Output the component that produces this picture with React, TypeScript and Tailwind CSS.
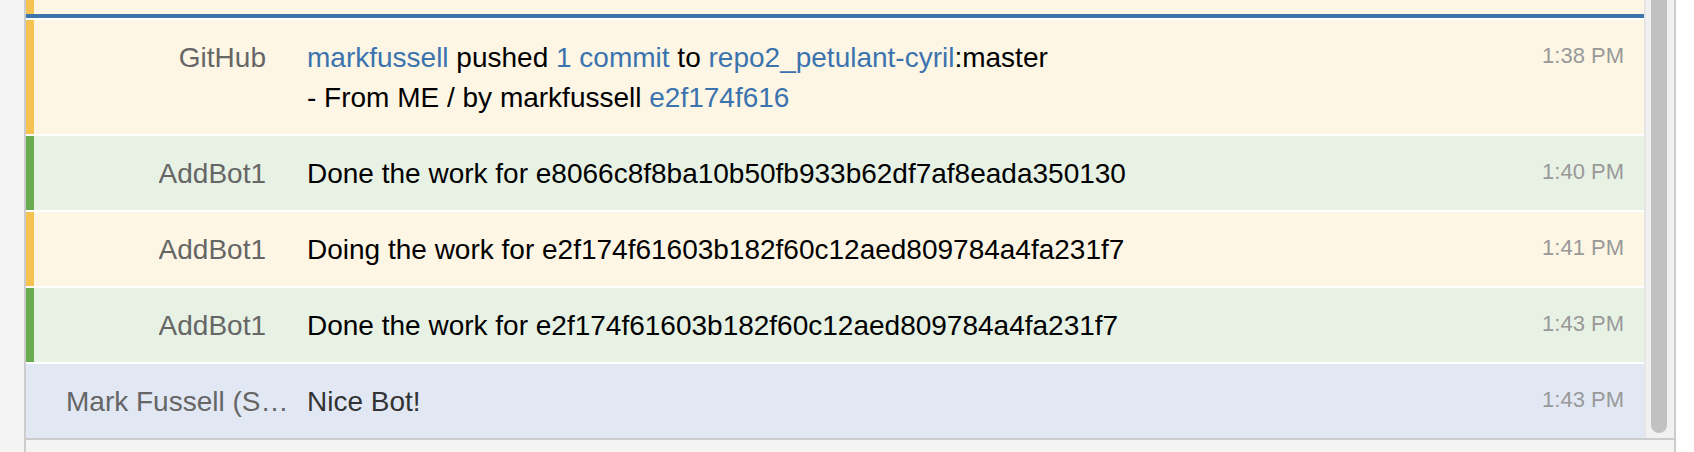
import type { ReactNode } from 'react';

type Kind = 'yellow' | 'green' | 'blue';

const rowBg: Record<Kind, string> = {
  yellow: 'bg-[#fdf6e4]',
  green: 'bg-[#e7f1e4]',
  blue: 'bg-[#e1e8f3]',
};

const stripeBg: Record<Kind, string> = {
  yellow: 'bg-[#f6c350]',
  green: 'bg-[#69ab4f]',
  blue: 'bg-[#e1e8f3]',
};

const Link = ({ children }: { children: ReactNode }) => (
  <span className="text-[#3b73af]">{children}</span>
);

function Message({
  kind,
  name,
  time,
  children,
  muted,
}: {
  kind: Kind;
  name: string;
  time: string;
  children: ReactNode;
  muted?: boolean;
}) {
  return (
    <div className={`flex ${rowBg[kind]}`}>
      <div className={`w-[8px] shrink-0 ${stripeBg[kind]}`} />
      {/* sender column */}
      <div className="w-[232px] shrink-0 pl-[32px] pt-[18px] pb-[16px] text-right text-[#666666] leading-[40px] whitespace-nowrap">
        <span className="inline-block max-w-[228px] truncate align-top">{name}</span>
      </div>
      {/* body */}
      <div
        className={`ml-[41px] flex-1 pt-[18px] pb-[16px] leading-[40px] ${muted ? 'text-[#333333]' : 'text-black'}`}
      >
        {children}
      </div>
      <div className="w-[120px] shrink-0 pr-[20px] pt-[18px] text-right text-[22px] leading-[36px] text-[#999999]">
        {time}
      </div>
    </div>
  );
}

export default function App() {
  return (
    <div
      className="flex w-[1694px] h-[452px] overflow-hidden bg-white text-[28px]"
      style={{ fontFamily: '"Liberation Sans", Arial, Helvetica, sans-serif' }}
    >
      {/* left gutter */}
      <div className="w-[24px] shrink-0 bg-[#f4f4f4]" />

      {/* chat panel */}
      <div className="flex w-[1652px] shrink-0 flex-col border-x-2 border-[#cccccc] bg-[#f4f4f4]">
        <div className="flex h-[440px] shrink-0 border-b-2 border-[#cccccc]">
          {/* message list */}
          <div className="flex flex-1 flex-col gap-[2px] overflow-hidden bg-white">
            {/* tail of the previous message + divider */}
            <div>
              <div className="flex h-[14px] bg-[#fdf6e4]">
                <div className="w-[8px] bg-[#f6c350]" />
              </div>
              <div className="h-[4px] bg-[#3d74ae]" />
            </div>

            <Message kind="yellow" name="GitHub" time="1:38 PM">
              <Link>markfussell</Link> pushed <Link>1 commit</Link> to{' '}
              <Link>repo2_petulant-cyril</Link>:master
              <br />- From ME / by markfussell <Link>e2f174f616</Link>
            </Message>

            <Message kind="green" name="AddBot1" time="1:40 PM">
              Done the work for e8066c8f8ba10b50fb933b62df7af8eada350130
            </Message>

            <Message kind="yellow" name="AddBot1" time="1:41 PM">
              Doing the work for e2f174f61603b182f60c12aed809784a4fa231f7
            </Message>

            <Message kind="green" name="AddBot1" time="1:43 PM">
              Done the work for e2f174f61603b182f60c12aed809784a4fa231f7
            </Message>

            <Message kind="blue" name="Mark Fussell (ShastaQA)" time="1:43 PM" muted>
              Nice Bot!
            </Message>
          </div>

          {/* scrollbar */}
          <div className="flex w-[30px] shrink-0 justify-center border-l-2 border-[#e6e6e6] bg-[#f1f1f1] pr-[2px]">
            <div className="h-[433px] w-[16px] rounded-b-full bg-[#c1c1c1]" />
          </div>
        </div>
        <div className="flex-1" />
      </div>

      {/* right margin */}
      <div className="flex-1 bg-white" />
    </div>
  );
}
